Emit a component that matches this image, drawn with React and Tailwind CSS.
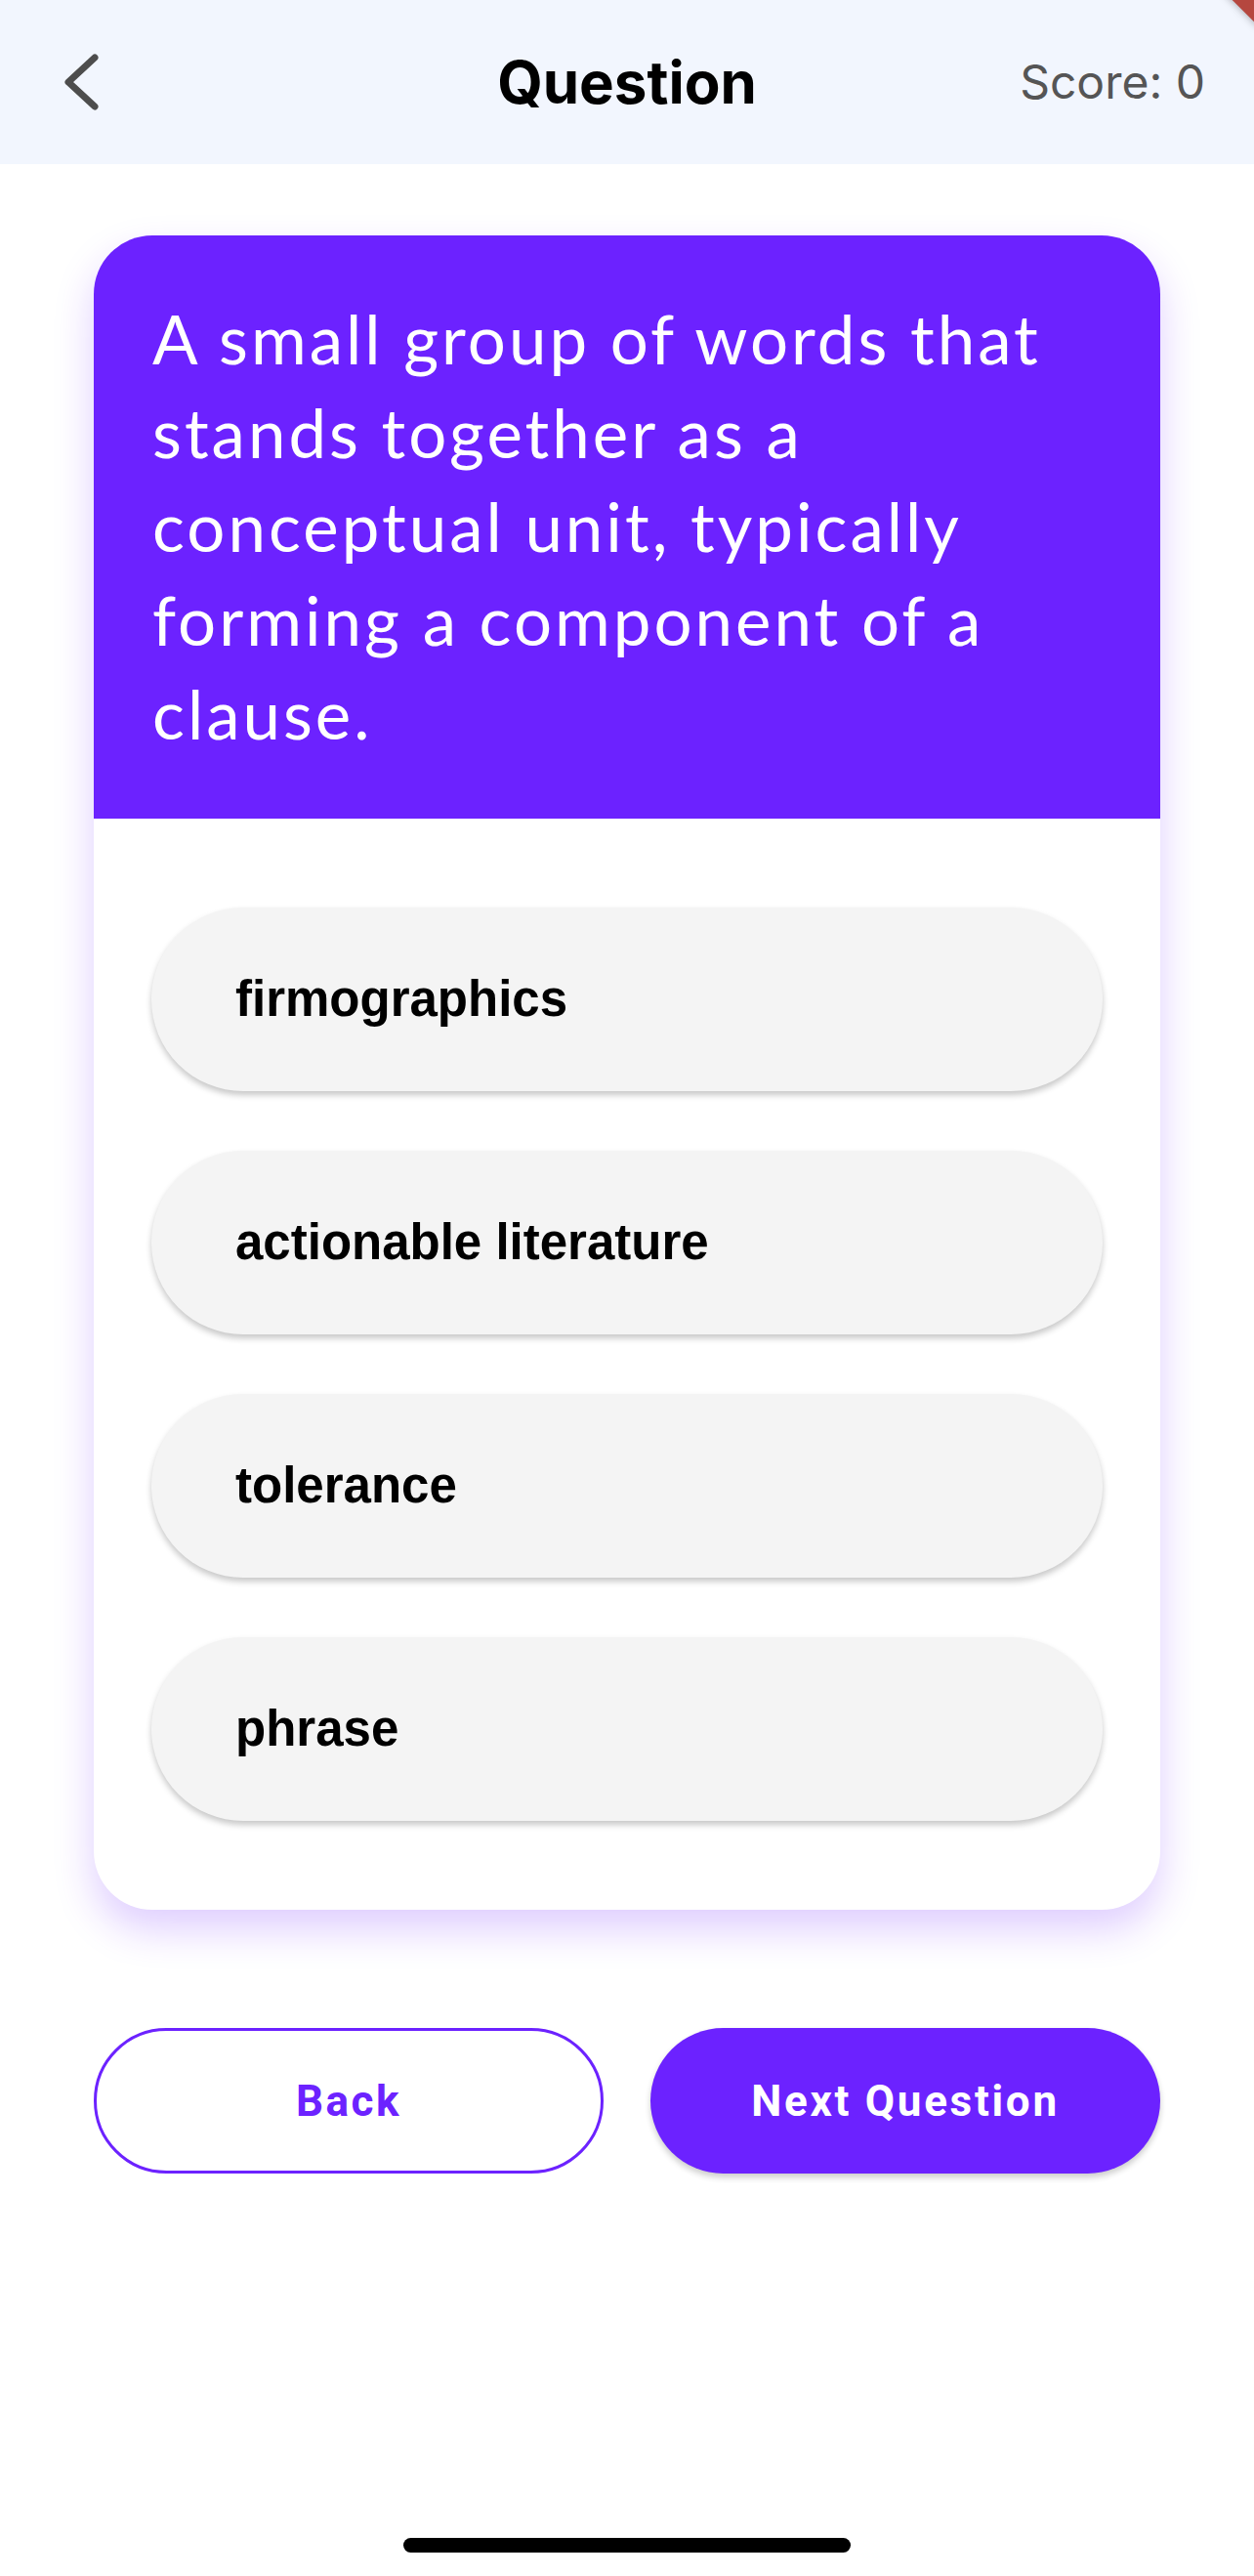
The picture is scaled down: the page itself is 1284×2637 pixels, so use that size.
import React from "react";

const options = ["firmographics", "actionable literature", "tolerance", "phrase"];

export default function App() {
  return (
    <div className="relative flex h-[2637px] w-[1284px] flex-col overflow-hidden bg-white">
      {/* Header */}
      <header className="grid h-[168px] shrink-0 grid-cols-3 items-center bg-[#f2f6fe]">
        <div className="flex items-center pl-[63px]">
          <svg width="40" height="60" viewBox="0 0 40 60" fill="none">
            <path d="M34 5 L7 30 L34 55" stroke="#4d4d4d" strokeWidth="7" strokeLinecap="round" strokeLinejoin="round" />
          </svg>
        </div>
        <div className="text-center font-['Inter',sans-serif] text-[60px] font-bold leading-none text-black">
          Question
        </div>
        <div className="pr-[50px] text-right font-['Inter',sans-serif] text-[48px] leading-none text-[#555555]">
          Score: 0
        </div>
      </header>

      {/* Card */}
      <div className="mx-[96px] mt-[73px] overflow-hidden rounded-[60px] bg-white shadow-[0_20px_40px_rgba(108,34,255,0.22)]">
        <div className="bg-[#6c22ff] px-[60px] pb-[59px] pt-[58px]">
          <p className="font-['Lato',sans-serif] text-[69px] leading-[96px] tracking-[3px] text-white">
            A small group of words that stands together as a conceptual unit, typically forming a component of a clause.
          </p>
        </div>
        <div className="flex flex-col gap-[61px] px-[59px] py-[91px]">
          {options.map((o) => (
            <div
              key={o}
              className="flex h-[188px] items-center rounded-full bg-[#f4f4f4] pl-[86px] shadow-[0_4px_6px_rgba(0,0,0,0.22)]"
            >
              <span className="font-['Liberation_Sans',sans-serif] text-[51px] font-bold text-black">{o}</span>
            </div>
          ))}
        </div>
      </div>

      {/* Buttons */}
      <div className="mx-[96px] mt-[121px] grid grid-cols-2 gap-[48px]">
        <button className="flex h-[149px] items-center justify-center rounded-full border-[3px] border-[#6c22ff] bg-white font-['Roboto',sans-serif] text-[44px] font-bold tracking-[2.5px] text-[#6c22ff]">
          Back
        </button>
        <button className="flex h-[149px] items-center justify-center rounded-full bg-[#6c22ff] font-['Roboto',sans-serif] text-[44px] font-bold tracking-[2.7px] text-white shadow-[0_4px_6px_rgba(0,0,0,0.2)]">
          Next Question
        </button>
      </div>

      <div className="flex-1" />
      <div className="mx-auto mb-[24px] h-[15px] w-[458px] rounded-full bg-black" />

      {/* Debug ribbon corner */}
      <div className="absolute right-0 top-0 h-[40px] w-[40px] overflow-hidden">
        <div className="absolute right-[-28px] top-[-28px] h-[40px] w-[60px] rotate-45 bg-[#b5473f] shadow-[0_0_8px_rgba(0,0,0,0.35)]" />
      </div>
    </div>
  );
}
